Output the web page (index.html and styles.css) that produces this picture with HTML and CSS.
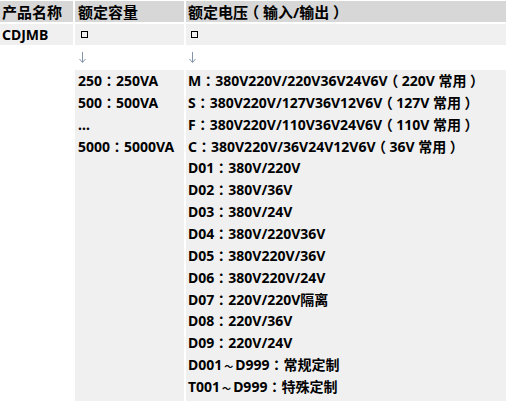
FILE: index.html
```html
<!DOCTYPE html>
<html lang="zh">
<head>
<meta charset="utf-8">
<link rel="stylesheet" href="styles.css">
</head>
<body>
<div class="spec">
  <div class="cell head c1">产品名称</div>
  <div class="cell head c2">额定容量</div>
  <div class="cell head c3">额定电压<span class="q">（</span>输入/输出<span class="q">）</span></div>

  <div class="cell row2 c1">CDJMB</div>
  <div class="cell row2 c2"><span class="box"></span></div>
  <div class="cell row2 c3"><span class="box"></span></div>

  <div class="cell arrow c1"></div>
  <div class="cell arrow c2"><svg class="down" width="7" height="11" viewBox="0 0 7 11"><path d="M3.5 0V10M0.5 7L3.5 10.5L6.5 7" fill="none" stroke="#8593ab" stroke-width="1"/></svg></div>
  <div class="cell arrow c3"><svg class="down" width="7" height="11" viewBox="0 0 7 11"><path d="M3.5 0V10M0.5 7L3.5 10.5L6.5 7" fill="none" stroke="#8593ab" stroke-width="1"/></svg></div>

  <div class="cell body c1"></div>
  <div class="cell body c2 filled">
    <div class="line">250<span class="p" lang="zh-TW">：</span>250VA</div>
    <div class="line">500<span class="p" lang="zh-TW">：</span>500VA</div>
    <div class="line">…</div>
    <div class="line">5000<span class="p" lang="zh-TW">：</span>5000VA</div>
  </div>
  <div class="cell body c3 filled">
    <div class="line">M<span class="p" lang="zh-TW">：</span>380V220V/220V36V24V6V<span class="q">（</span>220V 常用<span class="q">）</span></div>
    <div class="line">S<span class="p" lang="zh-TW">：</span>380V220V/127V36V12V6V<span class="q">（</span>127V 常用<span class="q">）</span></div>
    <div class="line">F<span class="p" lang="zh-TW">：</span>380V220V/110V36V24V6V<span class="q">（</span>110V 常用<span class="q">）</span></div>
    <div class="line">C<span class="p" lang="zh-TW">：</span>380V220V/36V24V12V6V<span class="q">（</span>36V 常用<span class="q">）</span></div>
    <div class="line">D01<span class="p" lang="zh-TW">：</span>380V/220V</div>
    <div class="line">D02<span class="p" lang="zh-TW">：</span>380V/36V</div>
    <div class="line">D03<span class="p" lang="zh-TW">：</span>380V/24V</div>
    <div class="line">D04<span class="p" lang="zh-TW">：</span>380V/220V36V</div>
    <div class="line">D05<span class="p" lang="zh-TW">：</span>380V220V/36V</div>
    <div class="line">D06<span class="p" lang="zh-TW">：</span>380V220V/24V</div>
    <div class="line">D07<span class="p" lang="zh-TW">：</span>220V/220V隔离</div>
    <div class="line">D08<span class="p" lang="zh-TW">：</span>220V/36V</div>
    <div class="line">D09<span class="p" lang="zh-TW">：</span>220V/24V</div>
    <div class="line">D001<span class="t">～</span>D999<span class="p" lang="zh-TW">：</span>常规定制</div>
    <div class="line">T001<span class="t">～</span>D999<span class="p" lang="zh-TW">：</span>特殊定制</div>
  </div>
</div>
</body>
</html>
```
FILE: styles.css
```css
html, body {
  margin: 0;
  padding: 0;
  background: #ffffff;
}
body {
  font-family: "Noto Sans", "Noto Sans CJK SC", sans-serif;
  font-weight: 700;
  font-size: 14px;
  color: #000000;
  overflow: hidden;
}
.spec {
  display: grid;
  grid-template-columns: 73px 109px 320px;
  grid-template-rows: 21px 21px 21px auto;
  gap: 2px;
  padding-top: 1px;
  width: 506px;
}
.cell {
  box-sizing: border-box;
  padding: 0 2px;
  display: flex;
  align-items: center;
  white-space: nowrap;
}
.c2 {
  padding-left: 3px;
}
.head {
  background: #d7d7d7;
  font-size: 15px;
}
.row2 {
  background: #f0f0f0;
}
.arrow {
  background: #ffffff;
}
.body {
  display: block;
  min-height: 340px;
}
.filled {
  background: #f0f0f0;
}
.line {
  height: 21.86px;
  line-height: 21.86px;
}
.p {
  font-family: "Noto Sans CJK SC", sans-serif;
}
.q {
  font-family: "Noto Sans CJK SC", sans-serif;
  font-feature-settings: "halt";
  padding: 0 0.25em;
}
.t {
  font-family: "Noto Sans CJK SC", sans-serif;
  font-size: 9px;
  padding: 0 2px;
}
.box {
  display: inline-block;
  width: 5px;
  height: 5px;
  border: 1px solid #000000;
  margin-left: 3px;
}
.down {
  display: block;
  margin-left: 1px;
}
```
